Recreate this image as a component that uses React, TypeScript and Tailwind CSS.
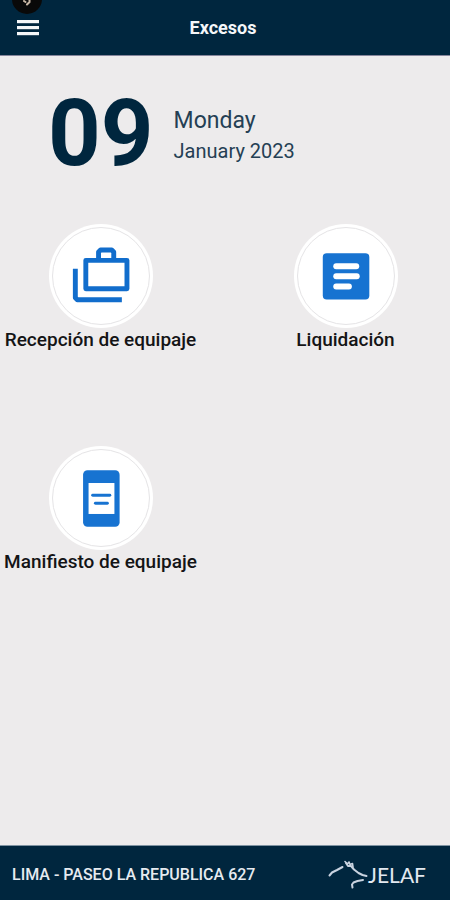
import type { ReactNode } from "react";

function BaggageIcon() {
  return (
    <svg viewBox="3 3 98 98" className="h-full w-full" fill="none" stroke="#116dcc" strokeWidth={5} strokeLinejoin="round">
      <rect x="36.5" y="36" width="42" height="29" />
      <path d="M49.5 36V27.5L51.5 25.5H63L65 27.5V36" />
      <path d="M25.8 44.5V74.2L27.8 76.2H73.3" />
    </svg>
  );
}

function ArticleIcon() {
  return (
    <svg viewBox="3 3 98 98" className="h-full w-full" fill="none">
      <rect x="28.3" y="28.7" width="47.5" height="47.3" rx="4" fill="#1773d1" />
      <g stroke="#fff" strokeWidth={6} strokeLinecap="round">
        <path d="M42 42H62.5" />
        <path d="M42 52.3H63" />
        <path d="M42 62.7H55" />
      </g>
    </svg>
  );
}

function ManifestIcon() {
  return (
    <svg viewBox="3 3 98 98" className="h-full w-full" fill="none">
      <rect x="33.7" y="23.7" width="37.3" height="57.6" rx="4.5" fill="#1773d1" />
      <rect x="39.3" y="36.7" width="26.4" height="31.6" fill="#fff" />
      <g stroke="#1773d1" strokeWidth={3} strokeLinecap="round">
        <path d="M43.5 49.2H61" />
        <path d="M46.3 57.3H58.5" />
      </g>
    </svg>
  );
}

function HorseLogo() {
  return (
    <svg viewBox="0 0 40 30" className="h-[30px] w-10" fill="none" stroke="#c9d3e0" strokeLinecap="round" strokeLinejoin="round">
      <path d="M1.5 15.5L4 12.5L9 10L14.5 7" strokeWidth={2} />
      <path d="M17 1.5L19.5 4L21 2L22 4.5L24.5 3.5L25 7" strokeWidth={1.6} />
      <path d="M18 3L20 6L23 6L26 9.5L30.5 13L34.5 15L38.5 16" strokeWidth={2} />
      <path d="M35 20L29.5 21L25.5 22.5L24 24.5L24.5 27.5" strokeWidth={2} />
    </svg>
  );
}

function Tile({ label, children }: { label: string; children: ReactNode }) {
  return (
    <button className="flex h-[222px] flex-col items-center">
      <span className="rounded-full bg-white p-[3px]">
        <span className="block size-[98px] rounded-full border border-[#e5e4e6]">
          {children}
        </span>
      </span>
      <span className="whitespace-nowrap text-[19px] leading-6 font-medium text-[#141416]">
        {label}
      </span>
    </button>
  );
}

export default function App() {
  return (
    <div className="flex min-h-screen flex-col bg-[#edebec] font-['Roboto',sans-serif]">
      {/* Top bar */}
      <header className="relative grid h-14 grid-cols-[1fr_auto_1fr] items-center overflow-hidden border-b border-[#85859b] bg-[#00263e] pr-5 pl-4">
        <div className="absolute -top-4 left-3 flex size-[30px] items-end justify-center rounded-full bg-[#090909] pb-2">
          <svg viewBox="0 0 12 14" className="h-3.5 w-3" fill="none" stroke="#c9b8a6" strokeWidth={2} strokeLinecap="round">
            <path d="M3 9L4.5 10" />
            <path d="M8.5 7V10L6 12.5" />
          </svg>
        </div>
        <button aria-label="Menu" className="w-6">
          <svg viewBox="0 0 24 18" className="h-[18px] w-6" fill="#f4f6f8">
            <rect x="1" y="1" width="22" height="3.2" />
            <rect x="1" y="7" width="22" height="3.2" />
            <rect x="1" y="13" width="22" height="3.2" />
          </svg>
        </button>
        <h1 className="text-[18px] leading-6 font-bold text-[#f5f7f9]">Excesos</h1>
      </header>

      <main className="flex-1">
        {/* Date */}
        <div className="flex items-center gap-5 px-12 pt-7 text-[#00263e]">
          <span className="text-[92px] leading-[100px] font-bold">09</span>
          <div className="pt-1 text-[#253f54]">
            <p className="text-[23px] leading-[30px]">Monday</p>
            <p className="text-[20px] leading-[30px]">January 2023</p>
          </div>
        </div>

        {/* Options */}
        <div className="grid grid-cols-2 gap-x-11 pt-10 pr-1">
          <Tile label="Recepción de equipaje">
            <BaggageIcon />
          </Tile>
          <Tile label="Liquidación">
            <ArticleIcon />
          </Tile>
          <Tile label="Manifiesto de equipaje">
            <ManifestIcon />
          </Tile>
        </div>
      </main>

      {/* Branch */}
      <footer className="flex h-[55px] items-center justify-between border-t border-[#7f93a2] bg-[#00263e] pt-1 pr-6 pl-3">
        <span className="text-[16px] leading-6 font-medium text-[#e6ebf0]">LIMA - PASEO LA REPUBLICA 627</span>
        <div className="flex items-center">
          <HorseLogo />
          <span className="font-['Lato',sans-serif] text-[21px] leading-7 text-[#e3e9f0]">JELAF</span>
        </div>
      </footer>
    </div>
  );
}
